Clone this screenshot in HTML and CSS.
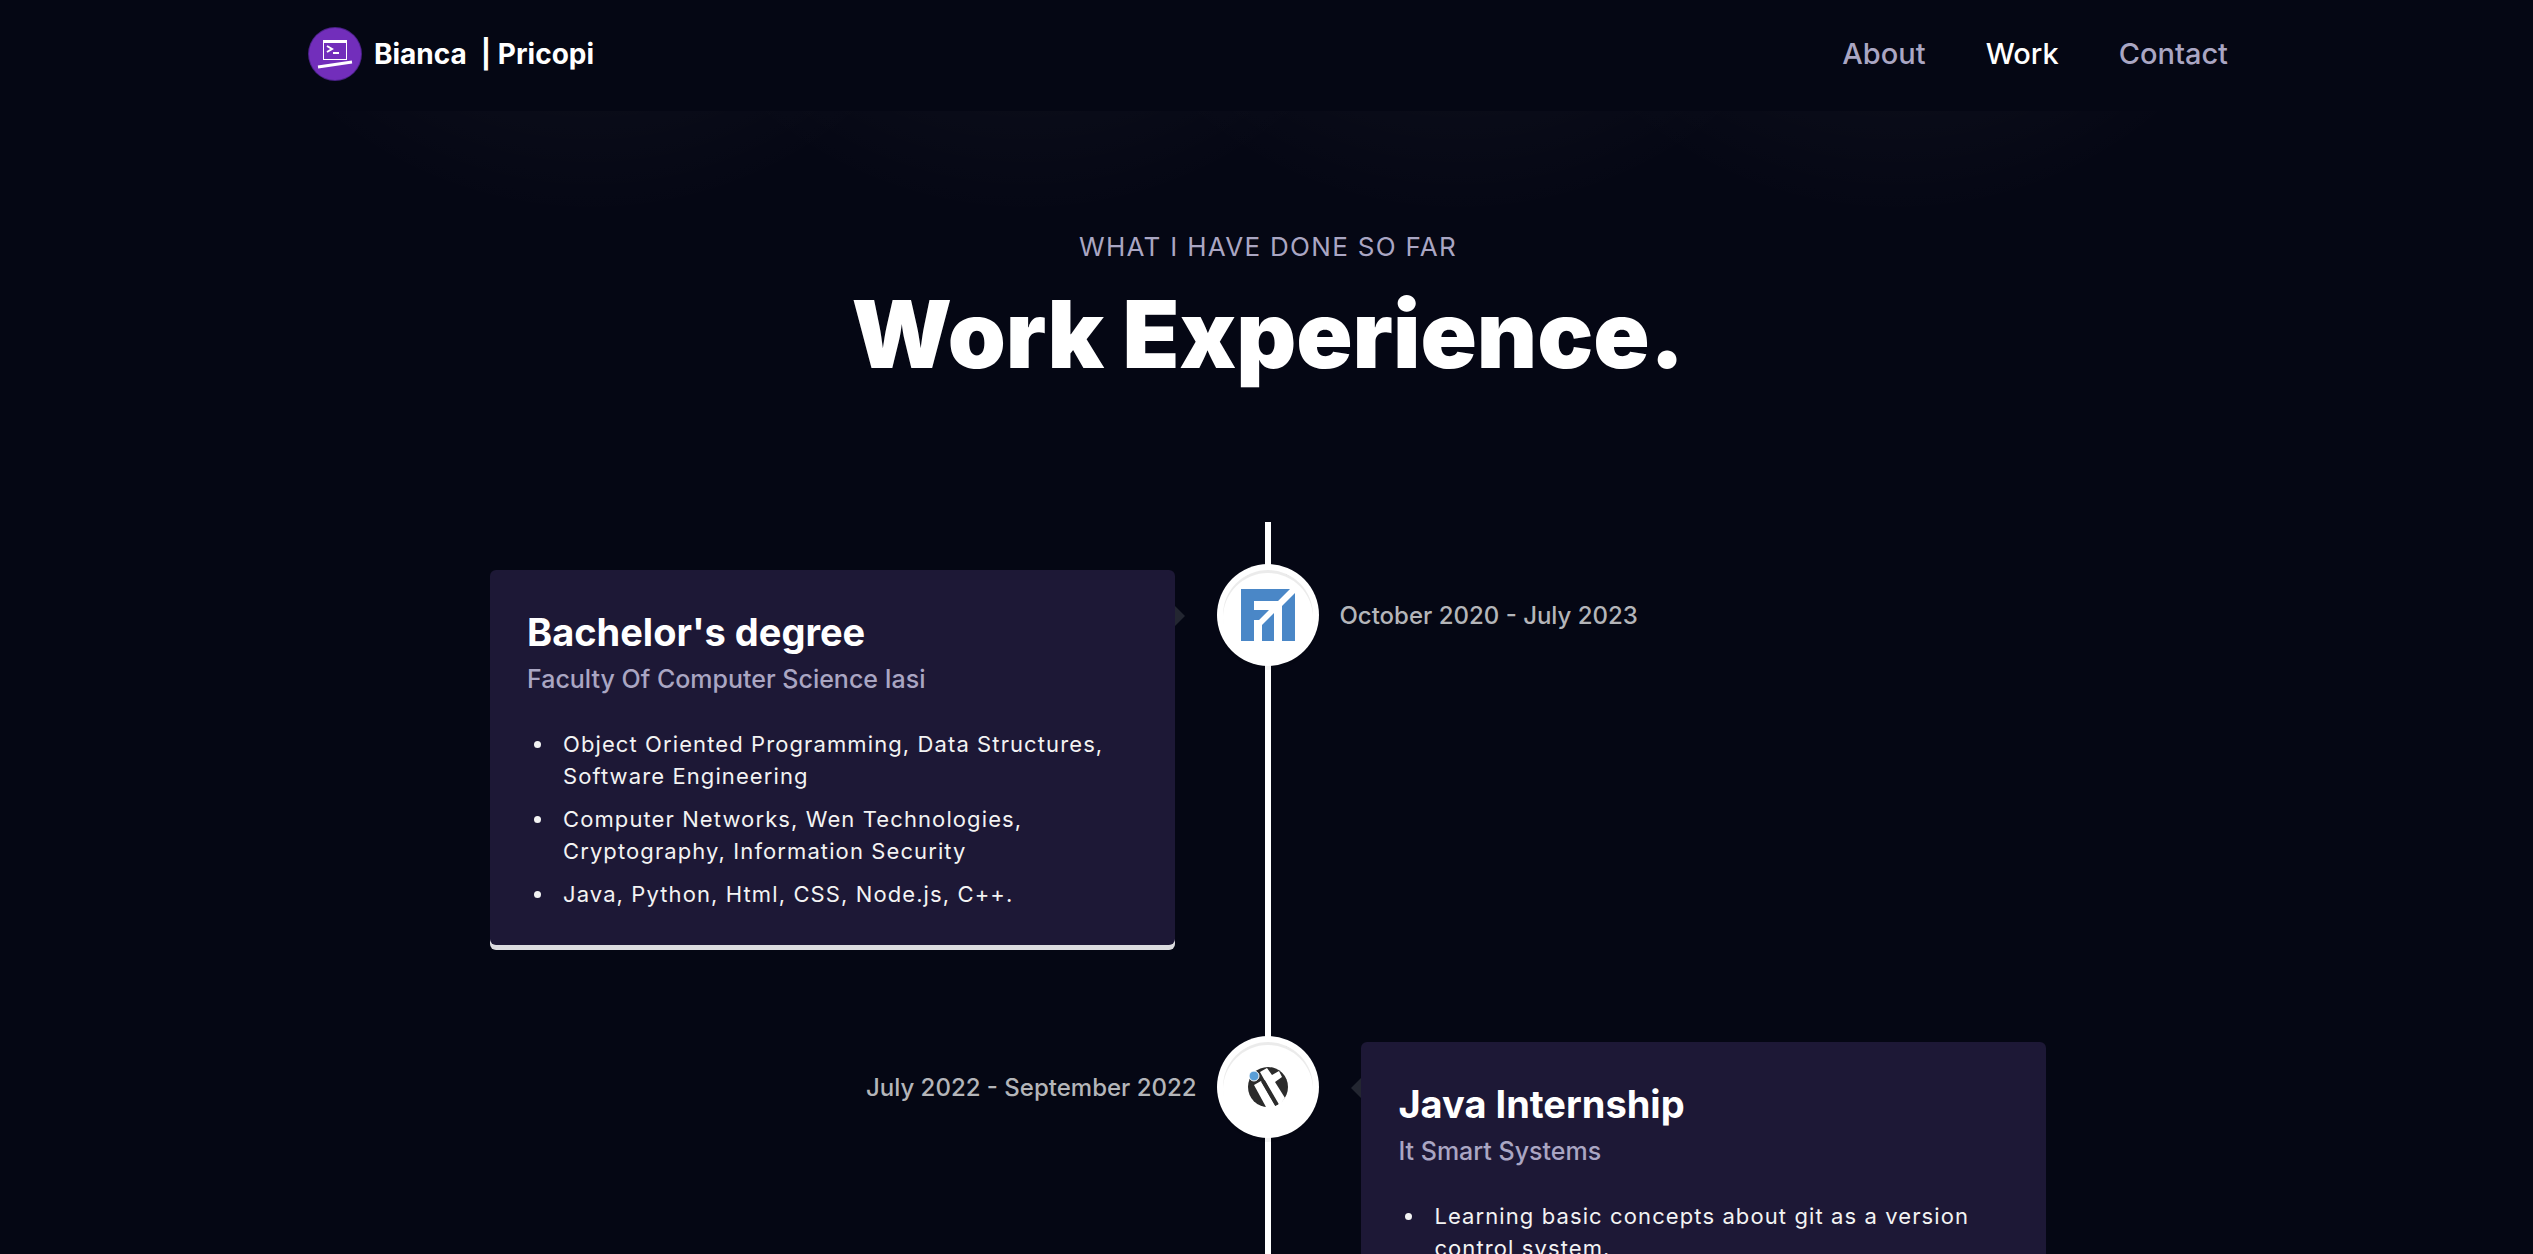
FILE: index.html
```html
<!DOCTYPE html>
<html lang="en">
<head>
<meta charset="utf-8">
<meta name="viewport" content="width=device-width, initial-scale=1">
<title>Bianca | Pricopi</title>
<link rel="stylesheet" href="styles.css">
</head>
<body>
<header class="navbar">
  <div class="navbar-inner">
    <a class="brand" href="#home">
      <svg class="brand-logo" viewBox="0 0 54 54" aria-hidden="true">
        <circle cx="27" cy="27" r="27" fill="#4a2187"/>
        <circle cx="27" cy="27" r="26" fill="#722ebb"/>
        <path d="M15 13h24v20H15zM16 16v16h22V16z" fill="#fff" fill-rule="evenodd"/>
        <path d="M19 19l5 3-5 3" fill="none" stroke="#fff" stroke-width="2"/>
        <path d="M25 26h6" stroke="#fff" stroke-width="2"/>
        <path d="M10 40l34-5" stroke="#fff" stroke-width="3"/>
      </svg>
      <span class="brand-name"><span>Bianca</span><span>| Pricopi</span></span>
    </a>
    <nav>
      <ul class="nav-links">
        <li><a href="#about">About</a></li>
        <li><a class="active" href="#work">Work</a></li>
        <li><a href="#contact">Contact</a></li>
      </ul>
    </nav>
  </div>
</header>
<main id="work">
  <div class="section-head">
    <p class="section-sub">What I have done so far</p>
    <h2 class="section-title">Work Experience.</h2>
  </div>
  <div class="timeline">
    <article class="entry">
      <div class="card">
        <h3>Bachelor's degree</h3>
        <p class="company">Faculty Of Computer Science Iasi</p>
        <ul class="points">
          <li>Object Oriented Programming, Data Structures, Software Engineering</li>
          <li>Computer Networks, Wen Technologies, Cryptography, Information Security</li>
          <li>Java, Python, Html, CSS, Node.js, C++.</li>
        </ul>
      </div>
      <div class="badge">
        <svg viewBox="0 0 54 52" width="54" height="52" aria-label="Faculty of Computer Science" role="img">
          <g fill="#4a87c7">
            <path d="M0 0H49L37 12H13V21H28L18 31H13V52H0Z"/>
            <path d="M21 36L33 24V52H21Z"/>
            <path d="M41 17L54 4V52H41Z"/>
          </g>
        </svg>
      </div>
      <time class="date">October 2020 - July 2023</time>
    </article>
    <article class="entry entry-right">
      <div class="card">
        <h3>Java Internship</h3>
        <p class="company">It Smart Systems</p>
        <ul class="points">
          <li>Learning basic concepts about git as a version control system.</li>
        </ul>
      </div>
      <div class="badge">
        <svg viewBox="0 0 40 40" width="40" height="40" aria-label="It Smart Systems" role="img">
          <circle cx="20" cy="20" r="20" fill="#2b2b2b"/>
          <path d="M6 18l7-4 15 26H18z" fill="#fff"/>
          <path d="M12 5l7-4 5 7 7-4 3 6-7 5 10 16-6 8z" fill="#fff"/>
          <path d="M15 14l14 24" stroke="#2b2b2b" stroke-width="4"/>
          <circle cx="6" cy="9" r="5" fill="#5a9fd8" stroke="#fff"/>
        </svg>
      </div>
      <time class="date">July 2022 - September 2022</time>
    </article>
  </div>
</main>
</body>
</html>
```
FILE: styles.css
```css
* { box-sizing: border-box; margin: 0; padding: 0; }

html { height: 100%; overflow: hidden; background: #050714; }
body {
  padding-left: 3px;
  color: #fff;
  font-family: Inter, "Open Sans", sans-serif;
}
ul { list-style: none; }
a { color: inherit; text-decoration: none; }

.navbar-inner {
  display: flex;
  align-items: center;
  justify-content: space-between;
  max-width: 1920px;
  margin: 0 auto;
  padding: 27px 0 30px;
}
.brand { display: flex; align-items: center; gap: 12px; }
.brand-logo { width: 54px; height: 54px; }
.brand-name { display: flex; gap: 14px; font-size: 28px; line-height: 40px; font-weight: 700; }
.nav-links { display: flex; gap: 60px; color: #aaa6c3; font-size: 29px; line-height: 40px; font-weight: 500; }
.nav-links .active { color: #fff; }

/* faint pools of light spilling from under the navbar */
main {
  --glow: rgba(255, 255, 255, 0.02) 74%, transparent 100%;
  background:
    radial-gradient(circle 420px at calc(50% - 677px) -313px, var(--glow)),
    radial-gradient(circle 420px at calc(50% - 241px) -313px, var(--glow)),
    radial-gradient(circle 420px at calc(50% + 191px) -313px, var(--glow)),
    radial-gradient(circle 420px at calc(50% + 628px) -313px, var(--glow));
}

.section-head { padding: 116px 24px 0; text-align: center; }
.section-sub {
  color: #aaa6c3;
  font-size: 26px;
  line-height: 40px;
  letter-spacing: 0.05em;
  text-transform: uppercase;
}
.section-title { font-size: 93px; line-height: 134px; font-weight: 900; }

.timeline {
  position: relative;
  display: grid;
  gap: 97px;
  width: 95%;
  max-width: 1556px;
  margin: 121px auto 0;
  padding: 48px 0;
}
.timeline::before {
  content: "";
  position: absolute;
  top: 0;
  bottom: 0;
  left: calc(50% - 3px);
  width: 6px;
  background: #fff;
}
.entry {
  display: grid;
  grid-template-columns: 44% 1fr 44%;
  align-items: start;
}
.card {
  position: relative;
  grid-area: 1 / 1;
  padding: 36px 37px 35px;
  border-radius: 6px;
  background: #1d1836;
  box-shadow: 0 5px 0 #dcdce0;
}
.card::before {
  content: "";
  position: absolute;
  top: 36px;
  left: 100%;
  border: 10px solid transparent;
  border-right-width: 0;
  border-left-color: #232631;
}
.card h3 { margin-bottom: 2px; font-size: 38px; line-height: 53px; font-weight: 700; }
.company { color: #aaa6c3; font-size: 25px; line-height: 36px; font-weight: 500; }
.points {
  display: grid;
  gap: 11px;
  margin-top: 31px;
  padding-left: 28px;
  list-style: disc;
  color: #f3f3f3;
  font-size: 22px;
  line-height: 32px;
  letter-spacing: 0.05em;
}
.points li { padding-left: 8px; }
.badge {
  position: relative;
  grid-area: 1 / 2;
  justify-self: center;
  display: grid;
  place-items: center;
  width: 90px;
  height: 90px;
  border-radius: 50%;
  background: #fff;
  box-shadow: 0 0 0 6px #fff, inset 0 3px 0 rgba(0, 0, 0, 0.08), 0 4px 0 6px rgba(0, 0, 0, 0.05);
}
.date {
  grid-area: 1 / 3;
  margin-left: -22px;
  padding-top: 28px;
  color: #b4b5b9;
  font-size: 24px;
  line-height: 36px;
  font-weight: 500;
}
.entry-right .card { grid-area: 1 / 3; }
.entry-right .card::before {
  right: 100%;
  left: auto;
  border-width: 10px 10px 10px 0;
  border-right-color: #232631;
}
.entry-right .date { grid-area: 1 / 1; margin: 0 -22px 0 0; text-align: right; }
```
